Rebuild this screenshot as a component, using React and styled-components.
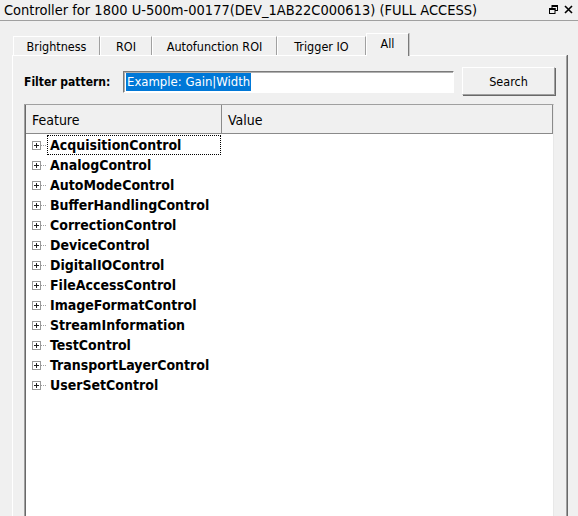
import React from "react";
import styled, { createGlobalStyle } from "styled-components";

const Global = createGlobalStyle`
  html, body { margin: 0; padding: 0; background: #f0f0f0; overflow: hidden; }
  body { font-family: "DejaVu Sans Condensed", "DejaVu Sans", sans-serif; color: #000; }
  * { box-sizing: border-box; }
`;

const Window = styled.div`
  width: 578px;
  height: 516px;
  overflow: hidden;
  background: #f0f0f0;
`;

const TitleBar = styled.div`
  height: 21px;
  display: flex;
  align-items: center;
  justify-content: space-between;
  padding: 0 4px 1px 4px;
  border-bottom: 1px solid #a0a0a0;
  font-size: 14.5px;
  white-space: nowrap;
`;

const TitleButtons = styled.div`
  display: flex;
  align-items: center;
  gap: 6px;
  padding-right: 1px;
`;

const TabStrip = styled.div`
  display: flex;
  align-items: flex-end;
  margin-top: 12px;
  padding-left: 13px;
  height: 22px;
  position: relative;
  z-index: 1;
`;

const Tab = styled.div`
  width: ${(p) => p.$w}px;
  height: ${(p) => (p.$active ? 23 : 19)}px;
  margin-bottom: ${(p) => (p.$active ? -1 : 0)}px;
  display: flex;
  align-items: center;
  justify-content: center;
  padding-bottom: ${(p) => (p.$active ? 3 : 0)}px;
  font-size: 12.5px;
  background: #f0f0f0;
  border-top: 1px solid #ffffff;
  border-left: 1px solid #ffffff;
  border-right: 1px solid ${(p) => (p.$active ? "#7a7a7a" : "#a0a0a0")};
  box-shadow: ${(p) => (p.$active ? "1px 0 0 #c8c8c8" : "none")};
`;

const Panel = styled.div`
  margin-left: 12px;
  width: 555px;
  height: 470px;
  border-top: 1px solid #ffffff;
  border-left: 1px solid #ffffff;
  border-right: 1px solid #a0a0a0;
  box-shadow: 1px 0 0 #696969;
  padding: 11px 12px 0 11px;
  display: flex;
  flex-direction: column;
`;

const FilterRow = styled.div`
  display: flex;
  align-items: center;
  height: 28px;
`;

const FilterLabel = styled.div`
  flex: 0 0 99px;
  font-size: 12px;
  font-weight: bold;
  white-space: nowrap;
  padding-top: 2px;
`;

const FilterInput = styled.div`
  flex: 0 0 331px;
  height: 22px;
  margin-top: 2px;
  background: #ffffff;
  border-top: 1px solid #7a7a7a;
  border-left: 1px solid #7a7a7a;
  border-right: 1px solid #ffffff;
  border-bottom: 1px solid #ffffff;
  box-shadow: inset 1px 1px 0 #b0b0b0;
  display: flex;
  align-items: center;
  padding-left: 2px;
`;

const Selected = styled.span`
  background: #0078d7;
  color: #ffffff;
  font-size: 13px;
  line-height: 18px;
  height: 18px;
  padding: 0 1px;
  white-space: nowrap;
`;

const SearchButton = styled.div`
  flex: 0 0 93px;
  height: 28px;
  margin-left: 8px;
  margin-right: -2px;
  background: #f0f0f0;
  border-top: 1px solid #ffffff;
  border-left: 1px solid #ffffff;
  border-right: 1px solid #a0a0a0;
  border-bottom: 1px solid #a0a0a0;
  box-shadow: 1px 1px 0 #696969;
  display: flex;
  align-items: center;
  justify-content: center;
  font-size: 12.5px;
  padding-top: 1px;
`;

const Tree = styled.div`
  margin-top: 9px;
  width: 530px;
  flex: 1;
  background: #ffffff;
  border-top: 1px solid #a0a0a0;
  border-left: 1px solid #a0a0a0;
  border-right: 1px solid #e8e8e8;
  box-shadow: inset 1px 0 0 #696969;
  display: flex;
  flex-direction: column;
`;

const Header = styled.div`
  display: grid;
  grid-template-columns: 196px 1fr;
  height: 29px;
  background: #f0f0f0;
  border-bottom: 1px solid #8a8a8a;
  margin-left: 1px;
`;

const HeaderCell = styled.div`
  display: flex;
  align-items: center;
  padding-left: 6px;
  font-size: 14px;
  border-right: 1px solid #8a8a8a;
  padding-top: 1px;
`;

const Rows = styled.div`
  padding-top: 1px;
  padding-left: 7px;
  display: flex;
  flex-direction: column;
`;

const Row = styled.div`
  height: 20px;
  display: flex;
  align-items: center;
`;

const Expander = styled.div`
  width: 9px;
  height: 9px;
  border: 1px solid #9a9a9a;
  position: relative;
  flex: 0 0 9px;
  margin-top: 1px;
  &::before {
    content: "";
    position: absolute;
    left: 1px;
    top: 3px;
    width: 5px;
    height: 1px;
    background: #202020;
  }
  &::after {
    content: "";
    position: absolute;
    left: 3px;
    top: 1px;
    width: 1px;
    height: 5px;
    background: #202020;
  }
`;

const Connector = styled.div`
  flex: 0 0 6px;
  height: 1px;
  margin-top: 1px;
  background-image: linear-gradient(to right, #a0a0a0 50%, transparent 50%);
  background-size: 2px 1px;
`;

const Label = styled.div`
  flex: 0 0 174px;
  height: 20px;
  display: flex;
  align-items: center;
  padding-left: 2px;
  font-size: 14px;
  font-weight: bold;
  white-space: nowrap;
  border: 1px dotted ${(p) => (p.$focused ? "#000000" : "transparent")};
`;

const tabs = [
  { label: "Brightness", w: 87 },
  { label: "ROI", w: 52 },
  { label: "Autofunction ROI", w: 125 },
  { label: "Trigger IO", w: 89 },
  { label: "All", w: 43, active: true },
];

const features = [
  "AcquisitionControl",
  "AnalogControl",
  "AutoModeControl",
  "BufferHandlingControl",
  "CorrectionControl",
  "DeviceControl",
  "DigitalIOControl",
  "FileAccessControl",
  "ImageFormatControl",
  "StreamInformation",
  "TestControl",
  "TransportLayerControl",
  "UserSetControl",
];

const RestoreIcon = () => (
  <svg width="9" height="9" viewBox="0 0 9 9">
    <rect x="3" y="0.5" width="5.5" height="5" fill="none" stroke="#000" strokeWidth="1" />
    <rect x="3" y="0" width="6" height="2" fill="#000" />
    <rect x="0.5" y="3.5" width="5.5" height="5" fill="#f0f0f0" stroke="#000" strokeWidth="1" />
    <rect x="0" y="3" width="6.5" height="2" fill="#000" />
  </svg>
);

const CloseIcon = () => (
  <svg width="9" height="9" viewBox="0 0 9 9">
    <path d="M1 1 L8 8 M8 1 L1 8" stroke="#000" strokeWidth="1.6" fill="none" />
  </svg>
);

export default function App() {
  return (
    <>
      <Global />
      <Window>
        <TitleBar>
          <span>Controller for 1800 U-500m-00177(DEV_1AB22C000613) (FULL ACCESS)</span>
          <TitleButtons>
            <RestoreIcon />
            <CloseIcon />
          </TitleButtons>
        </TitleBar>
        <TabStrip>
          {tabs.map((t) => (
            <Tab key={t.label} $w={t.w} $active={t.active}>
              {t.label}
            </Tab>
          ))}
        </TabStrip>
        <Panel>
          <FilterRow>
            <FilterLabel>Filter pattern:</FilterLabel>
            <FilterInput>
              <Selected>Example: Gain|Width</Selected>
            </FilterInput>
            <SearchButton>Search</SearchButton>
          </FilterRow>
          <Tree>
            <Header>
              <HeaderCell>Feature</HeaderCell>
              <HeaderCell>Value</HeaderCell>
            </Header>
            <Rows>
              {features.map((f, i) => (
                <Row key={f}>
                  <Expander />
                  <Connector />
                  <Label $focused={i === 0}>{f}</Label>
                </Row>
              ))}
            </Rows>
          </Tree>
        </Panel>
      </Window>
    </>
  );
}
